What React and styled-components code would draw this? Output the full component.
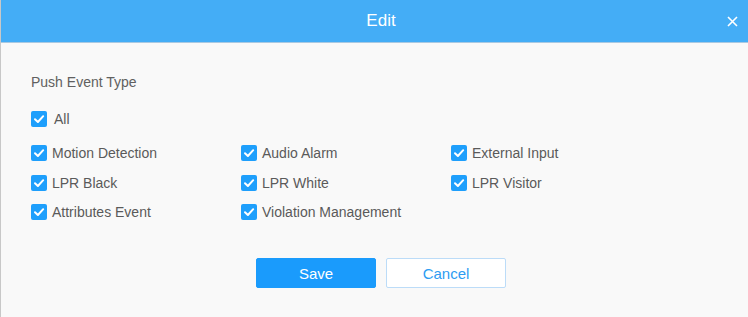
import React from 'react';
import styled, { createGlobalStyle } from 'styled-components';

const GlobalStyle = createGlobalStyle`
  html, body { margin: 0; padding: 0; overflow: hidden; }
  body { font-family: "Liberation Sans", Arial, sans-serif; background: #f9f9f9; }
`;

const events = [
  'Motion Detection', 'Audio Alarm', 'External Input',
  'LPR Black', 'LPR White', 'LPR Visitor',
  'Attributes Event', 'Violation Management',
];

const CheckBox = ({ label, gap }) => (
  <CheckRow>
    <Box>
      <svg width="12" height="12" viewBox="0 0 12 12">
        <path d="M2 6.2 L4.9 9 L10.2 3.2" fill="none" stroke="#fff" strokeWidth="2" strokeLinecap="round" strokeLinejoin="round" />
      </svg>
    </Box>
    <Label gap={gap}>{label}</Label>
  </CheckRow>
);

const App = () => (
  <>
    <GlobalStyle />
    <Dialog>
      <Header>
        <Title>Edit</Title>
        <Close>
          <svg width="11" height="11" viewBox="0 0 11 11">
            <path d="M1 1 L10 10 M10 1 L1 10" stroke="#fff" strokeWidth="1.6" />
          </svg>
        </Close>
      </Header>
      <Body>
        <SectionTitle>Push Event Type</SectionTitle>
        <AllRow>
          <CheckBox label="All" gap={7} />
        </AllRow>
        <Grid>
          {events.map((e) => <CheckBox key={e} label={e} />)}
        </Grid>
        <Actions>
          <Button primary>Save</Button>
          <Button>Cancel</Button>
        </Actions>
      </Body>
    </Dialog>
  </>
);

const Dialog = styled.div`
  width: 748px;
  height: 317px;
  background: #f9f9f9;
  border-left: 1px solid #c8c8c8;
  box-sizing: border-box;
  display: flex;
  flex-direction: column;
`;

const Header = styled.div`
  height: 42px;
  background: #44adf6;
  border-bottom: 1px solid #a9c9e2;
  display: flex;
  align-items: center;
  padding-left: 41px;
  flex-shrink: 0;
`;

const Title = styled.div`
  flex: 1;
  text-align: center;
  color: #fff;
  font-size: 17px;
`;

const Close = styled.div`
  width: 24px;
  margin-right: 4px;
  display: flex;
  justify-content: center;
  align-items: center;
`;

const Body = styled.div`
  padding: 29px 30px 0;
`;

const SectionTitle = styled.div`
  font-size: 14px;
  line-height: 20px;
  color: #606060;
  margin-bottom: 17px;
`;

const AllRow = styled.div`
  margin-bottom: 14px;
`;

const Grid = styled.div`
  display: grid;
  grid-template-columns: repeat(3, 210px);
  grid-auto-rows: 20px;
  row-gap: 9.5px;
`;

const CheckRow = styled.div`
  display: flex;
  align-items: center;
  height: 20px;
`;

const Box = styled.span`
  width: 16px;
  height: 16px;
  border-radius: 2px;
  background: #1e9ffc;
  display: flex;
  align-items: center;
  justify-content: center;
  flex-shrink: 0;
`;

const Label = styled.span`
  margin-left: ${(p) => p.gap || 5}px;
  font-size: 14px;
  color: #5a5a5a;
`;

const Actions = styled.div`
  display: flex;
  justify-content: center;
  gap: 10px;
  margin-top: 36px;
  padding-left: 13px;
`;

const Button = styled.button`
  width: 120px;
  height: 30px;
  border-radius: 2px;
  font-family: "Liberation Sans", Arial, sans-serif;
  font-size: 15px;
  cursor: pointer;
  border: 1px solid ${(p) => (p.primary ? '#1a9bfc' : '#bcdcf8')};
  background: ${(p) => (p.primary ? '#1a9bfc' : '#fff')};
  color: ${(p) => (p.primary ? '#fff' : '#2d9cf2')};
`;

export default App;
